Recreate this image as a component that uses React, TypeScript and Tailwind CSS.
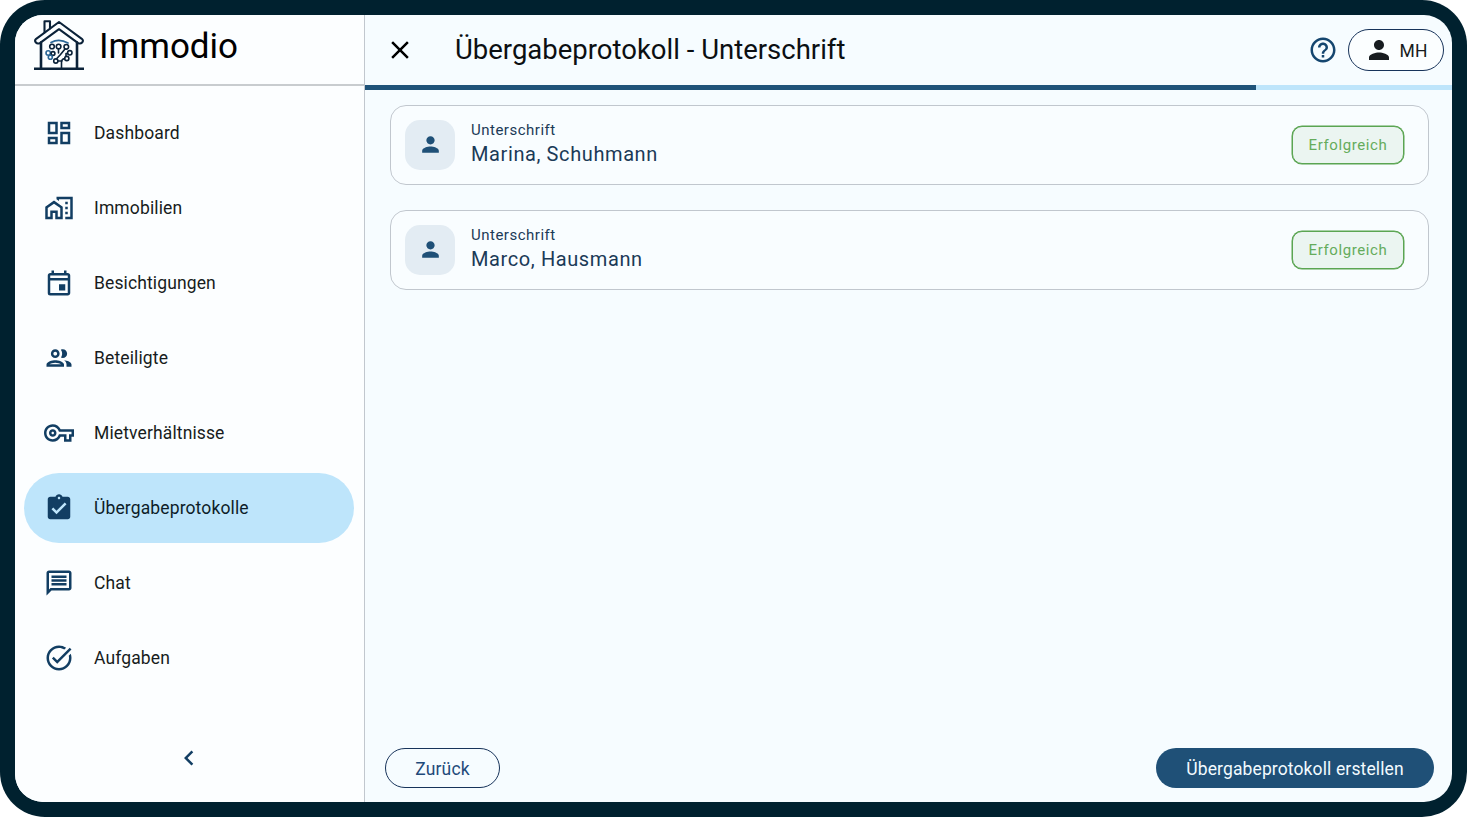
import type { IconType } from "react-icons";
import {
  MdChevronLeft,
  MdClose,
  MdHelpOutline,
  MdOutlineDashboard,
  MdOutlineEvent,
  MdOutlineMapsHomeWork,
  MdOutlineMessage,
  MdOutlinePeople,
  MdOutlineVpnKey,
  MdPerson,
  MdTaskAlt,
} from "react-icons/md";

function ClipboardCheck({ size = 30, className }: { size?: string | number; className?: string }) {
  return (
    <svg width={size} height={size} viewBox="0 0 24 24" fill="currentColor" className={className}>
      <path d="M19 3h-4.180C14.400 1.840 13.300 1 12 1s-2.400.840-2.820 2H5c-1.100 0-2 .9-2 2v14c0 1.100.9 2 2 2h14c1.100 0 2-.9 2-2V5c0-1.100-.9-2-2-2zm-7 0c.55 0 1 .45 1 1s-.45 1-1 1-1-.45-1-1 .45-1 1-1zm-2 14-4-4 1.410-1.410L10 14.170l6.590-6.590L18 9l-8 8z" />
    </svg>
  );
}

const navItems: { label: string; icon: IconType | typeof ClipboardCheck; active?: boolean }[] = [
  { label: "Dashboard", icon: MdOutlineDashboard },
  { label: "Immobilien", icon: MdOutlineMapsHomeWork },
  { label: "Besichtigungen", icon: MdOutlineEvent },
  { label: "Beteiligte", icon: MdOutlinePeople },
  { label: "Mietverhältnisse", icon: MdOutlineVpnKey },
  { label: "Übergabeprotokolle", icon: ClipboardCheck, active: true },
  { label: "Chat", icon: MdOutlineMessage },
  { label: "Aufgaben", icon: MdTaskAlt },
];

const signers = ["Marina, Schuhmann", "Marco, Hausmann"];

function Logo() {
  return (
    <svg width="50" height="52" viewBox="0 0 50 52" fill="none" stroke="#0b2239" strokeWidth="2.1" strokeLinejoin="round" strokeLinecap="round">
      <path d="M10.500 12.500V1.300h5.500v7.200" />
      <path d="M25 2 2.200 18.800q-2 1.800-.3 3.700t4.300.3L25 9.200 43.800 22.800q2.500 1.600 4.300-.3t-.3-3.700Z" />
      <path d="M7 22.500V48M43 22.500V48" strokeWidth="2.600" />
      <path d="M0 48.800H50" strokeWidth="2.500" strokeLinecap="butt" />
      <path d="M17 22.500Q25 18 34 23" stroke="#2b6797" strokeWidth="1.700" />
      <g strokeWidth="1.600">
        <path d="M27.500 48V42.500Q27.500 39 30.500 38.500M24.500 29V33M31 29 26.500 34.500 22.800 38.500" />
        <path d="M23.800 41H27.500M32 36V33.500H33.500" />
        <circle cx="18" cy="26.500" r="2.300" />
        <circle cx="24.600" cy="26.500" r="2.300" />
        <circle cx="32.300" cy="26.800" r="2.300" />
        <circle cx="14.200" cy="33" r="2.200" stroke="#2b6797" />
        <circle cx="19" cy="33.500" r="1.900" />
        <circle cx="16.300" cy="37.300" r="2" stroke="#2b6797" />
        <circle cx="21.800" cy="41" r="2.100" />
        <circle cx="35.800" cy="32.800" r="2.200" />
        <circle cx="32.800" cy="38.500" r="2.100" />
      </g>
    </svg>
  );
}

function Sidebar() {
  return (
    <aside className="flex w-[350px] shrink-0 flex-col border-r border-[#c1c7ce] bg-[#fcfeff]">
      <div className="flex h-[71px] shrink-0 items-start border-b-2 border-[#c8cccf] pt-[5px] pl-[19px]">
        <Logo />
        <span className="ml-[15px] text-[35px] leading-[53px] text-black">Immodio</span>
      </div>
      <nav className="mt-3 flex flex-col gap-[5px] pr-[10px] pl-[9px]">
        {navItems.map(({ label, icon: Icon, active }) => (
          <a
            key={label}
            className={
              active
                ? "flex h-[70px] items-center gap-5 rounded-full bg-[#bee5fb] pl-5 text-[#0d1d29]"
                : "flex h-[70px] items-center gap-5 rounded-full pl-5 text-[#171c20]"
            }
          >
            <Icon size={30} className="mb-px shrink-0 text-[#123e63]" />
            <span className="text-[17.5px] tracking-[0.125px]">{label}</span>
          </a>
        ))}
      </nav>
      <button className="mt-[50px] flex justify-center pr-0.5 text-[#123e63]">
        <MdChevronLeft size={30} />
      </button>
    </aside>
  );
}

function SignerCard({ name }: { name: string }) {
  return (
    <div className="flex h-20 items-center rounded-[16px] border border-[#c1c7ce] bg-[#f9fdff] pr-6 pl-[14px]">
      <div className="flex size-[50px] items-center justify-center rounded-[15px] bg-[#e3ecf3] pb-px text-[#1f5077]">
        <MdPerson size={25} />
      </div>
      <div className="ml-4 flex flex-col text-[#1b3a57]">
        <span className="text-[15px] leading-[18px] tracking-[0.5px]">Unterschrift</span>
        <span className="text-[20px] leading-[31px] tracking-[0.6px]">{name}</span>
      </div>
      <span className="ml-auto flex h-[38px] w-28 items-center justify-center rounded-[10px] border border-[#5ba552] bg-[#ebf5f1] text-[15px] tracking-[0.6px] text-[#65ac5c] shadow-[0_0_0_0.5px_#5ba552]">
        Erfolgreich
      </span>
    </div>
  );
}

export default function App() {
  return (
    <div className="h-[817px] w-[1467px] bg-white font-[Roboto,sans-serif]">
      <div className="h-full rounded-[45px] bg-[#00212f] p-[15px]">
        <div className="flex h-full overflow-hidden rounded-[28px] bg-[#f6fcff]">
          <Sidebar />
          <main className="flex min-w-0 flex-1 flex-col">
            <header className="flex h-[70px] shrink-0 items-center pr-2 pl-5">
              <MdClose size={30} className="text-black" />
              <h1 className="ml-10 text-[27.5px] leading-9 text-[#0b0f12]">Übergabeprotokoll - Unterschrift</h1>
              <MdHelpOutline size={30} className="ml-auto text-[#15466f]" />
              <div className="ml-[10px] flex h-[42px] w-24 items-center rounded-full border-[1.5px] border-[#17335a] bg-[#fbfeff] pl-[15px] text-[#171c20]">
                <MdPerson size={30} />
                <span className="ml-[5.5px] pt-0.5 text-[17.5px] tracking-[0.125px]">MH</span>
              </div>
            </header>
            <div className="h-[5px] shrink-0 bg-[#bee5fb]">
              <div className="h-full w-[891px] bg-[#1f5379]" />
            </div>
            <section className="flex flex-1 flex-col gap-[25px] pt-[15px] pr-[23px] pl-[25px]">
              {signers.map((name) => (
                <SignerCard key={name} name={name} />
              ))}
            </section>
            <footer className="flex items-center justify-between pr-[18px] pb-[14px] pl-5">
              <button className="h-10 w-[115px] rounded-full border-[1.5px] border-[#17335a] pt-0.5 text-[17.5px] tracking-[0.125px] text-[#1f4a7a]">Zurück</button>
              <button className="h-10 w-[278px] rounded-full bg-[#1f5077] pt-0.5 text-[17.5px] tracking-[0.125px] text-[#f2fbff]">
                Übergabeprotokoll erstellen
              </button>
            </footer>
          </main>
        </div>
      </div>
    </div>
  );
}
